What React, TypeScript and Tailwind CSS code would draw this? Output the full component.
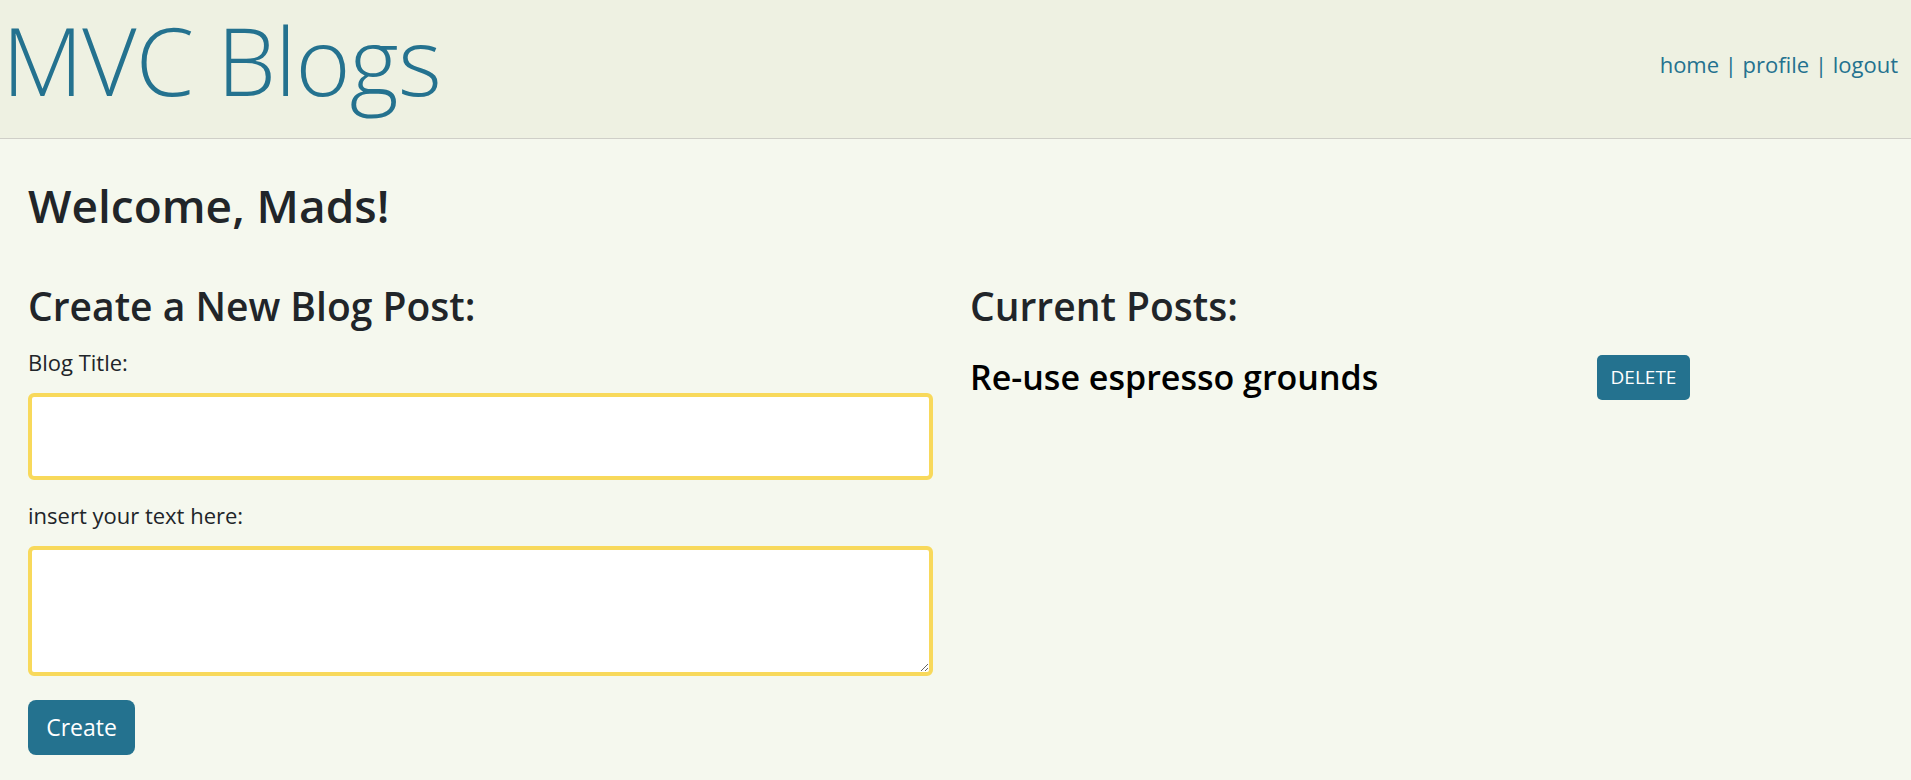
export default function App() {
  return (
    <div className="min-h-screen bg-[#f5f8ee] font-['Open_Sans',sans-serif] text-[#212529]">
      {/* Header */}
      <header className="h-[139px] flex justify-between items-start bg-[#eef1e2] border-b border-[#cfcfc8] pl-[2px] pr-[13px]">
        <h1 className="text-[94px] leading-[120px] font-light text-[#24728f] tracking-[-0.8px]">
          MVC Blogs
        </h1>
        <nav className="text-[22px] leading-[33px] text-[#24728f] mt-[48px]">
          <a href="#">home</a> | <a href="#">profile</a> | <a href="#">logout</a>
        </nav>
      </header>

      <main className="px-[28px] pt-[39px] pb-6">
        <h2 className="text-[46px] leading-[1.2] font-semibold">Welcome, Mads!</h2>

        <div className="grid grid-cols-[905px_1fr] gap-[37px] mt-[50px]">
          {/* Left column: form */}
          <section>
            <h3 className="text-[39px] leading-[1.2] font-semibold">Create a New Blog Post:</h3>
            <form className="flex flex-col items-start mt-[17px]" onSubmit={(e) => e.preventDefault()}>
              <label className="text-[22px] leading-[30px]">Blog Title:</label>
              <input
                type="text"
                className="mt-[16px] w-full h-[87px] bg-white border-4 border-[#f8d95b] rounded-[6px] outline-none px-3"
              />
              <label className="text-[22px] leading-[30px] mt-[20px]">insert your text here:</label>
              <textarea className="mt-[16px] w-full h-[130px] bg-white border-4 border-[#f8d95b] rounded-[6px] outline-none px-3 py-2 block" />
              <button
                type="submit"
                className="mt-[24px] w-[107px] h-[55px] bg-[#24728f] text-white text-[23px] rounded-[8px]"
              >
                Create
              </button>
            </form>
          </section>

          {/* Right column: posts */}
          <section>
            <h3 className="text-[39px] leading-[1.2] font-semibold">Current Posts:</h3>
            <div className="flex items-center mt-[25px]">
              <div className="w-[627px] text-[34px] font-semibold text-black leading-[1.2]">
                Re-use espresso grounds
              </div>
              <button className="w-[93px] h-[45px] bg-[#24728f] text-white text-[19px] rounded-[5px] uppercase">
                Delete
              </button>
            </div>
          </section>
        </div>
      </main>
    </div>
  );
}
